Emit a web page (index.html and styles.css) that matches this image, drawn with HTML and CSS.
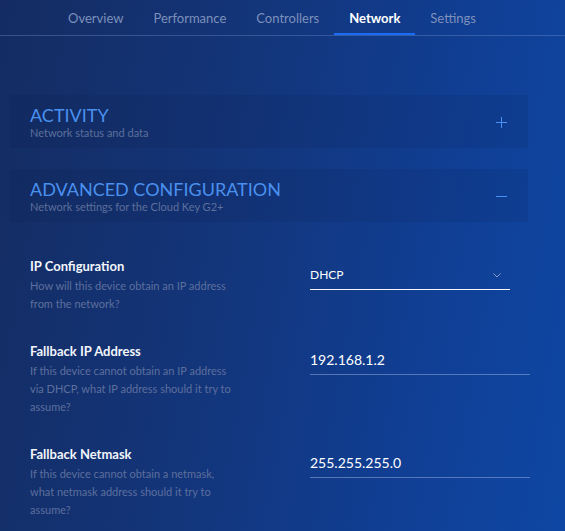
FILE: index.html
```html
<!DOCTYPE html>
<html lang="en">
<head>
<meta charset="utf-8">
<title>Network</title>
<link rel="stylesheet" href="styles.css">
</head>
<body>
<div class="page">
  <nav class="tabs">
    <a class="tab">Overview</a>
    <a class="tab">Performance</a>
    <a class="tab">Controllers</a>
    <a class="tab active">Network</a>
    <a class="tab">Settings</a>
  </nav>
  <main class="content">
    <section class="panel">
      <div class="panel-text">
        <h2 class="panel-title">ACTIVITY</h2>
        <p class="panel-sub">Network status and data</p>
      </div>
      <svg class="panel-icon" width="11" height="11" viewBox="0 0 11 11"><path d="M5.5 0V11M0 5.5H11" stroke="#4a8ff2" stroke-width="1" fill="none"/></svg>
    </section>
    <section class="panel">
      <div class="panel-text">
        <h2 class="panel-title">ADVANCED CONFIGURATION</h2>
        <p class="panel-sub">Network settings for the Cloud Key G2+</p>
      </div>
      <svg class="panel-icon" width="11" height="11" viewBox="0 0 11 11"><path d="M0 5.5H11" stroke="#4a8ff2" stroke-width="1" fill="none"/></svg>
    </section>
    <div class="form">
      <div class="row">
        <div class="info">
          <div class="label">IP Configuration</div>
          <div class="desc">How will this device obtain an IP address from the network?</div>
        </div>
        <div class="select">
          <span>DHCP</span>
          <svg class="chev" width="8" height="5" viewBox="0 0 8 5"><path d="M0.5 0.5L4 4L7.5 0.5" stroke="#8a9bc6" stroke-width="1" fill="none"/></svg>
        </div>
      </div>
      <div class="row">
        <div class="info">
          <div class="label">Fallback IP Address</div>
          <div class="desc">If this device cannot obtain an IP address via DHCP, what IP address should it try to assume?</div>
        </div>
        <div class="input">192.168.1.2</div>
      </div>
      <div class="row">
        <div class="info">
          <div class="label">Fallback Netmask</div>
          <div class="desc">If this device cannot obtain a netmask, what netmask address should it try to assume?</div>
        </div>
        <div class="input">255.255.255.0</div>
      </div>
    </div>
  </main>
</div>
</body>
</html>
```
FILE: styles.css
```css
html, body {
  margin: 0;
  padding: 0;
  height: 100%;
}
body {
  font-family: Lato, "Noto Sans", sans-serif;
  background: linear-gradient(100deg, #142c62 0%, #13357a 40%, #103f95 75%, #0e47a4 100%);
  color: #fff;
  overflow: hidden;
}
.page {
  min-height: 531px;
}
.tabs {
  display: flex;
  justify-content: center;
  padding-right: 21px;
  border-bottom: 1px solid rgba(120, 150, 210, 0.35);
  height: 35px;
}
.tab {
  display: block;
  font-size: 13px;
  line-height: 16px;
  padding: 10px 15px 7px;
  color: #7d90bb;
  border-bottom: 2px solid transparent;
}
.tab.active {
  color: #ffffff;
  font-weight: 700;
  border-bottom-color: #1a6cf6;
}
.content {
  padding-top: 59px;
  width: 540px;
}
.panel {
  margin: 0 0 21px 10px;
  width: 518px;
  box-sizing: border-box;
  display: flex;
  align-items: center;
  justify-content: space-between;
  padding: 10px 21px 8px 20px;
  background: rgba(5, 20, 60, 0.1);
}
.panel-title {
  margin: 0;
  font-size: 18px;
  line-height: 20px;
  font-weight: 400;
  color: #4a90ee;
}
.panel-sub {
  margin: 1px 0 0;
  font-size: 11px;
  line-height: 14px;
  color: #5d6f9b;
}
.panel-icon {
  display: block;
}
.form {
  padding-top: 15px;
}
.row {
  display: grid;
  grid-template-columns: 280px 220px;
  padding-left: 30px;
  margin-bottom: 30px;
}
.info {
  width: 205px;
}
.label {
  font-size: 13px;
  line-height: 16px;
  font-weight: 700;
  color: #f2f5fb;
}
.desc {
  margin-top: 3px;
  font-size: 11px;
  line-height: 18px;
  color: #5d6f9d;
}
.select {
  width: 200px;
  box-sizing: border-box;
  margin-top: 9px;
  align-self: start;
  display: flex;
  align-items: center;
  justify-content: space-between;
  font-size: 12px;
  line-height: 16px;
  padding: 0 9px 6px 0;
  border-bottom: 1px solid #f4f6fb;
}
.chev {
  display: block;
}
.input {
  width: 220px;
  box-sizing: border-box;
  margin-top: 7px;
  align-self: start;
  font-size: 14px;
  line-height: 20px;
  padding-bottom: 4px;
  border-bottom: 1px solid rgba(170, 190, 235, 0.45);
}
```
